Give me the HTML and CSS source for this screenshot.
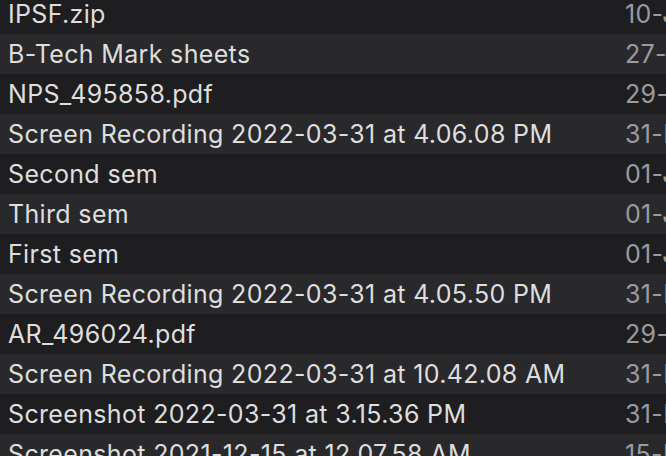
FILE: index.html
```html
<!DOCTYPE html>
<html lang="en">
<head>
<meta charset="utf-8">
<title>Files</title>
<link rel="stylesheet" href="styles.css">
</head>
<body>
<div class="list">
  <div class="row"><span class="name">IPSF.zip</span><span class="date">10-Jan-2022</span></div>
  <div class="row"><span class="name">B-Tech Mark sheets</span><span class="date">27-Mar-2022</span></div>
  <div class="row"><span class="name">NPS_495858.pdf</span><span class="date">29-Mar-2022</span></div>
  <div class="row"><span class="name">Screen Recording 2022-03-31 at 4.06.08 PM</span><span class="date">31-Mar-2022</span></div>
  <div class="row"><span class="name">Second sem</span><span class="date">01-Jan-2022</span></div>
  <div class="row"><span class="name">Third sem</span><span class="date">01-Jan-2022</span></div>
  <div class="row"><span class="name">First sem</span><span class="date">01-Jan-2022</span></div>
  <div class="row"><span class="name">Screen Recording 2022-03-31 at 4.05.50 PM</span><span class="date">31-Mar-2022</span></div>
  <div class="row"><span class="name">AR_496024.pdf</span><span class="date">29-Mar-2022</span></div>
  <div class="row"><span class="name">Screen Recording 2022-03-31 at 10.42.08 AM</span><span class="date">31-Mar-2022</span></div>
  <div class="row"><span class="name">Screenshot 2022-03-31 at 3.15.36 PM</span><span class="date">31-Mar-2022</span></div>
  <div class="row"><span class="name">Screenshot 2021-12-15 at 12.07.58 AM</span><span class="date">15-Dec-2021</span></div>
</div>
</body>
</html>
```

FILE: styles.css
```css
html, body {
  margin: 0;
  padding: 0;
  background: #1e1e21;
  overflow: hidden;
  width: 666px;
  height: 456px;
}
.list {
  margin-top: -6px;
  font-family: Inter, "Noto Sans", sans-serif;
  font-size: 25px;
  letter-spacing: 0.34px;
}
.row {
  display: grid;
  grid-template-columns: 1fr 41px;
  height: 40px;
  align-items: center;
  background: #1e1e21;
}
.row:nth-child(even) {
  background: #29292c;
}
.name {
  padding-left: 8px;
  color: #dedede;
  white-space: nowrap;
}
.date {
  color: #9b9b9e;
  white-space: nowrap;
  overflow: hidden;
}
```
